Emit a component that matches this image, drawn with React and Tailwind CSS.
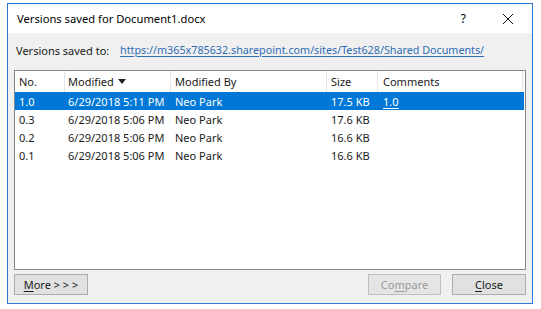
import React from "react";

const font = { fontFamily: '"Noto Sans", "Open Sans", sans-serif' };

const rows = [
  { no: "1.0", mod: "6/29/2018 5:11 PM", by: "Neo Park", size: "17.5 KB", c: "1.0", sel: true },
  { no: "0.3", mod: "6/29/2018 5:06 PM", by: "Neo Park", size: "17.6 KB" },
  { no: "0.2", mod: "6/29/2018 5:06 PM", by: "Neo Park", size: "16.6 KB" },
  { no: "0.1", mod: "6/29/2018 5:06 PM", by: "Neo Park", size: "16.6 KB" },
];

function Row({ r }) {
  return (
    <div className={`flex h-[18px] items-center ${r.sel ? "bg-[#0078d7] text-white" : "text-[#1a1a1a]"}`}>
      <div className="w-[50px] pl-[4px]">{r.no}</div>
      <div className="w-[106px] pl-[3px] whitespace-nowrap">{r.mod}</div>
      <div className="w-[156px] pl-[4px]">{r.by}</div>
      <div className="w-[51px] pl-[4px] whitespace-nowrap">{r.size}</div>
      <div className="flex-1 pl-[5px]">{r.c ? <span className="underline underline-offset-2">{r.c}</span> : null}</div>
    </div>
  );
}

export default function App() {
  return (
    <div className="w-[541px] h-[309px] bg-white pt-[3px] pl-[7px] text-[11px] leading-none" style={font}>
      <div className="w-[526px] h-[301px] border border-[#2b7bd4] flex flex-col">
        <div className="h-[29px] bg-white flex items-center pl-[9px] pr-[18px] text-[#000]">
          <span className="flex-1 text-[11.2px]">Versions saved for Document1.docx</span>
          <span className="mr-[36px] text-[12px]">?</span>
          <svg width="12" height="12" viewBox="0 0 12 12">
            <path d="M1 1 L11 11 M11 1 L1 11" stroke="#111" strokeWidth="1" />
          </svg>
        </div>
        <div className="flex-1 bg-[#f0f0f0] flex flex-col px-[6px]">
          <div className="h-[37px] flex items-center pb-[3px]">
            <span className="pl-[2px] w-[106px] text-[#1a1a1a]">Versions saved to:</span>
            <span className="text-[#2e6db4] text-[10.75px] underline underline-offset-2 whitespace-nowrap">
              https://m365x785632.sharepoint.com/sites/Test628/Shared Documents/
            </span>
          </div>
          <div className="h-[200px] border border-[#828790] bg-white flex flex-col">
            <div className="h-[21px] flex items-stretch text-[#1a1a1a] pr-[2px]">
              <div className="w-[50px] pl-[4px] flex items-center border-r border-[#e5e5e5]">No.</div>
              <div className="w-[106px] pl-[3px] flex items-center border-r border-[#e5e5e5]">
                Modified
                <svg width="8" height="5" viewBox="0 0 8 5" className="ml-[4px]">
                  <path d="M0 0 L8 0 L4 5 Z" fill="#222" />
                </svg>
              </div>
              <div className="w-[156px] pl-[4px] flex items-center border-r border-[#e5e5e5]">Modified By</div>
              <div className="w-[51px] pl-[4px] flex items-center border-r border-[#e5e5e5]">Size</div>
              <div className="flex-1 pl-[5px] flex items-center border-r border-[#e5e5e5]">Comments</div>
            </div>
            <div className="pr-[1px]">
              {rows.map((r, i) => (
                <Row key={i} r={r} />
              ))}
            </div>
          </div>
          <div className="flex items-center mt-[4px]">
            <button className="w-[74px] h-[21px] border border-[#adadad] bg-[#e1e1e1] text-[#1a1a1a] flex items-center justify-center pb-[1px]">
              <span><span className="underline underline-offset-2">M</span>ore &gt; &gt; &gt;</span>
            </button>
            <div className="flex-1" />
            <button className="w-[73px] h-[21px] border border-[#bfbfbf] bg-[#e5e5e5] text-[#9a9a9a] flex items-center justify-center">
              <span>Co<span className="underline underline-offset-2">m</span>pare</span>
            </button>
            <button className="ml-[11px] w-[74px] h-[21px] border border-[#adadad] bg-[#e1e1e1] text-[#1a1a1a] flex items-center justify-center">
              <span><span className="underline underline-offset-2">C</span>lose</span>
            </button>
          </div>
        </div>
      </div>
    </div>
  );
}
